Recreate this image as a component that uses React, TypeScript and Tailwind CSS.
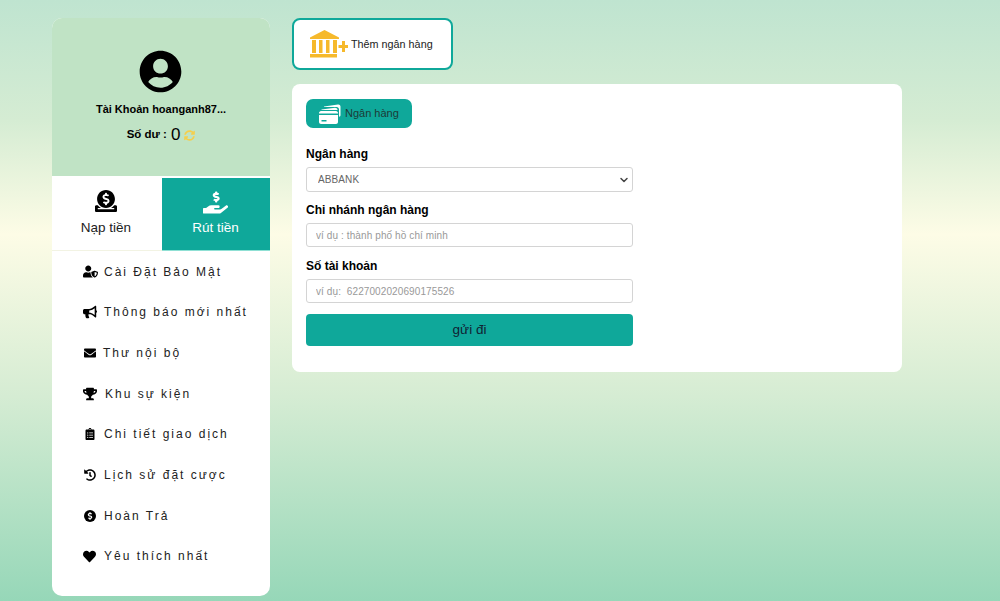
import { FaBullhorn, FaDollarSign, FaDonate, FaEnvelope, FaHandHoldingUsd, FaHeart, FaHistory, FaClipboardList, FaSyncAlt, FaTrophy, FaUserCircle, FaUserShield } from "react-icons/fa"
import { ChevronDown } from "lucide-react"

const RefundIcon = () => (
  <span className="flex h-[12px] w-[12px] items-center justify-center rounded-full bg-black text-white">
    <FaDollarSign size={8} />
  </span>
)

const menu = [
  { label: "Cài Đặt Bảo Mật", icon: <FaUserShield size={15} />, left: "pl-[31px]", gap: "gap-[6px]" },
  { label: "Thông báo mới nhất", icon: <FaBullhorn size={14} />, left: "pl-[31px]", gap: "gap-[7px]" },
  { label: "Thư nội bộ", icon: <FaEnvelope size={12} />, left: "pl-[32px]", gap: "gap-[7px]" },
  { label: "Khu sự kiện", icon: <FaTrophy size={14} />, left: "pl-[31px]", gap: "gap-[8px]" },
  { label: "Chi tiết giao dịch", icon: <FaClipboardList size={12} />, left: "pl-[32px]", gap: "gap-[8px]" },
  { label: "Lịch sử đặt cược", icon: <FaHistory size={12} />, left: "pl-[32px]", gap: "gap-[8px]" },
  { label: "Hoàn Trả", icon: <RefundIcon />, left: "pl-[32px]", gap: "gap-[8px]" },
  { label: "Yêu thích nhất", icon: <FaHeart size={13} />, left: "pl-[31px]", gap: "gap-[8px]" },
]

const BankPlusIcon = () => (
  <svg width="38" height="28" viewBox="0 0 38 28" fill="#f6b92b">
    <path d="M14.5 0 29 7.5V9H0V7.5Z" />
    <rect x="2" y="10" width="4" height="13" />
    <rect x="9" y="10" width="3.5" height="13" />
    <rect x="16" y="10" width="3.5" height="13" />
    <rect x="23" y="10" width="4" height="13" />
    <rect x="0" y="24" width="27" height="3.5" />
    <path d="M32 11h3v4h3v3h-3v4h-3v-4h-3.500v-3H32Z" />
  </svg>
)

const CardsIcon = () => (
  <svg width="22" height="20" viewBox="0 0 22 20" fill="#fff">
    <path d="M5 2.500 19 .5c1.200-.2 2.500.6 2.500 2V11c0 1-.5 1.600-1.500 1.800V5.500C20 4 19 3 17.500 3H5Z" />
    <path d="M2.500 5.500 16 3.800c1.200 0 2.500.7 2.500 2V6H2.500Z" />
    <path d="M2 7h15c1 0 2 1 2 2v.5H0V9c0-1 1-2 2-2Z" />
    <path d="M0 11h19v7c0 1-1 2-2 2H2c-1 0-2-1-2-2Zm2.500 5v1.500h5V16Z" fillRule="evenodd" />
  </svg>
)

const inputClass =
  "block w-full rounded-[3px] border border-[#d4d4d4] bg-white text-[10px] tracking-[0.1px] text-[#666] outline-none placeholder:text-[#999]"

const App = () => {
  return (
    <div className="flex h-[601px] gap-[22px] overflow-hidden bg-[linear-gradient(180deg,#bfe4d0_0%,#d5ecd3_20%,#fdfce6_39%,#d5ecd3_66%,#96d7b8_100%)] pl-[52px] pt-[18px] font-['Liberation_Sans',Arial,sans-serif] text-black">
      {/* Sidebar */}
      <aside className="flex h-[578px] w-[218px] shrink-0 flex-col overflow-hidden rounded-[10px] bg-white">
        <div className="flex h-[158px] flex-col items-center bg-[#c0e3c5] pt-[32px]">
          <FaUserCircle size={43} className="mr-[2px]" />
          <p className="mt-[9px] text-[11px] font-bold leading-[14px]">Tài Khoản hoanganh87...</p>
          <div className="mt-[10px] flex h-[18px] items-center text-[11.5px] font-bold">
            <span>Số dư :</span>
            <span className="ml-[4px] text-[17px] font-normal">0</span>
            <FaSyncAlt size={11} className="ml-[4px] text-[#f4cf4d]" />
          </div>
        </div>
        <div className="mt-[2px] flex h-[73px]">
          <div className="flex w-[110px] flex-col items-center border-b border-[#f2f3e3] pr-[2px] pt-[12px]">
            <FaDonate size={22} />
            <span className="mt-[7px] text-[13.5px] leading-[18px] text-[#222]">Nạp tiền</span>
          </div>
          <div className="flex flex-1 flex-col items-center border-b border-[#8fe0d4] bg-[#0fa89a] pr-[1px] pt-[12px] text-white">
            <FaHandHoldingUsd size={25} />
            <span className="mt-[4px] text-[13.5px] leading-[18px]">Rút tiền</span>
          </div>
        </div>
        <ul className="flex flex-col pt-[0.3px]">
          {menu.map((item) => (
            <li key={item.label} className={`flex h-[40.7px] items-center ${item.left} ${item.gap} text-[12px] tracking-[2px] text-[#222]`}>
              <span className="flex shrink-0 text-black">{item.icon}</span>
              <span>{item.label}</span>
            </li>
          ))}
        </ul>
      </aside>

      {/* Main */}
      <main className="flex w-[610px] shrink-0 flex-col items-start">
        <button
          type="button"
          className="flex h-[52px] w-[161px] items-center gap-[3px] rounded-[8px] border-2 border-[#0fa89a] bg-white pl-[16px] text-[10.8px] text-[#222]"
        >
          <BankPlusIcon />
          <span>Thêm ngân hàng</span>
        </button>

        <section className="mt-[14px] h-[288px] w-full rounded-[8px] bg-white pl-[14px] pr-[269px] pt-[15px]">
          <div className="flex h-[29px] w-[106px] items-center gap-[4px] rounded-[7px] bg-[#0fa89a] pl-[13px] text-[11px] text-[#1c3a36]">
            <CardsIcon />
            <span>Ngân hàng</span>
          </div>

          <form className="mt-[19px] flex flex-col">
            <label className="text-[12px] font-bold leading-[14px]">Ngân hàng</label>
            <div className="relative mt-[6px]">
              <select className={`${inputClass} h-[25px] appearance-none pl-[11px]`} defaultValue="ABBANK">
                <option>ABBANK</option>
              </select>
              <ChevronDown size={12} strokeWidth={3} className="absolute right-[3px] top-[7px] text-[#444]" />
            </div>

            <label className="mt-[11px] text-[12px] font-bold leading-[14px]">Chi nhánh ngân hàng</label>
            <input className={`${inputClass} mt-[6px] h-[24px] px-[9px]`} placeholder="ví dụ : thành phố hồ chí minh" />

            <label className="mt-[12px] text-[12px] font-bold leading-[14px]">Số tài khoản</label>
            <input className={`${inputClass} mt-[6px] h-[24px] px-[9px]`} placeholder="ví dụ:  6227002020690175526" />

            <button type="button" className="mt-[11px] h-[32px] w-full rounded-[4px] bg-[#0fa89a] text-[13.5px] text-[#123]">
              gửi đi
            </button>
          </form>
        </section>
      </main>
    </div>
  )
}

export default App
